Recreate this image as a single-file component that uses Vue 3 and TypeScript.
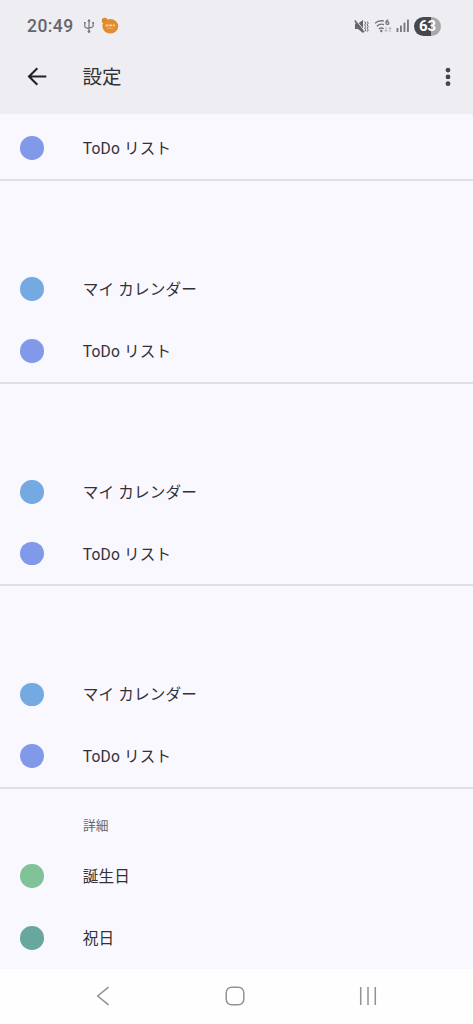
<script setup lang="ts">
interface Item { label: string; tone: string }
interface Group { kind: string; title?: string; items: Item[] }

const todo: Item = { label: 'ToDo リスト', tone: 'indigo' }
const mine: Item = { label: 'マイ カレンダー', tone: 'sky' }

const groups: Group[] = [
  { kind: 'first', items: [todo] },
  { kind: 'account', items: [mine, todo] },
  { kind: 'account', items: [mine, todo] },
  { kind: 'account', items: [mine, todo] },
  {
    kind: 'details',
    title: '詳細',
    items: [
      { label: '誕生日', tone: 'green' },
      { label: '祝日', tone: 'teal' },
    ],
  },
]
</script>

<template>
  <div class="screen">
    <header class="top">
      <div class="status">
        <span class="clock">20:49</span>
        <svg class="usb" width="12" height="16" viewBox="0 0 12 16" fill="none" stroke="#77767c" stroke-width="1.2">
          <path d="M6 2v11M1.8 5.5v2.7q0 1.8 4.2 2.2M10.2 5v2.7q0 1.8-4.2 2.2" />
          <path d="M4.3 3.5 6 .8l1.7 2.7zM1 4h1.7v1.7H1zM9.3 4H11v1.7H9.3z" fill="#77767c" stroke="none" />
          <circle cx="6" cy="13.6" r="1.4" fill="#77767c" stroke="none" />
        </svg>
        <svg class="badge" width="18" height="18" viewBox="0 0 18 18">
          <circle cx="3.7" cy="3.7" r="2.9" fill="#dd872d" />
          <ellipse cx="9.300" cy="9.3" rx="7.9" ry="7.3" fill="#e38b30" />
          <path d="M4.500 8.300h3m.7 0h3m.7 0h2" stroke="#f6d3a8" stroke-width="1.7" />
          <path d="M6 11.200h6" stroke="#eeb172" stroke-width="1" />
        </svg>
        <div class="spacer"></div>
        <svg class="mute" width="15" height="15" viewBox="0 0 15 15" fill="none" stroke="#66656b" stroke-width="1.2">
          <path d="M1 4.500h3L9 1v13l-5-4H1z" fill="#66656b" stroke="none" />
          <path d="M1.900.8 10.500 12" stroke="#ededf2" stroke-width="1" />
          <path d="M.8 1.500 9.700 13.300" stroke-width="1.500" />
          <path d="M10.700 2.500l1 1.700-1 1.700 1 1.700-1 1.700 1 1.700-1 1.600M13.200 2.500l1 1.700-1 1.700 1 1.700-1 1.700 1 1.700-1 1.600" stroke-width="1" />
        </svg>
        <svg class="wifi" width="19" height="16" viewBox="0 0 19 16" fill="none" stroke="#77767c" stroke-width="1.3">
          <path d="M1 5.300q3.500-3.400 8.800-2.300M2.800 8.200q3-2.900 7.200-1.600M4.900 10.900q2.300-1.700 4.900-.2" />
          <circle cx="7.300" cy="13" r="1.200" fill="#77767c" stroke="none" />
          <path d="M14.200 1.800q-2.200.5-2.200 3" />
          <circle cx="13.500" cy="5.100" r="1.400" />
          <path d="M12 9v4.500m-1.500-1.500 1.500 1.500 1.500-1.500M16 14V9.500m-1.500 1.500L16 9.500l1.500 1.500" stroke="#b5b4ba" stroke-width="1" />
        </svg>
        <svg class="signal" width="14" height="14" viewBox="0 0 14 14" fill="#7b7a80">
          <rect x="0.500" y="9" width="1.900" height="4" rx=".5" />
          <rect x="4" y="6.500" width="1.900" height="6.500" rx=".5" />
          <rect x="7.500" y="3.500" width="1.900" height="9.500" rx=".5" />
          <rect x="11" y="0.500" width="1.900" height="12.500" rx=".5" />
        </svg>
        <div class="battery">63</div>
      </div>
      <div class="bar">
        <svg class="back" width="20" height="20" viewBox="0 0 20 20" fill="none" stroke="#222127" stroke-width="2.1">
          <path d="M19.300 9.500H2.200M10.300 1.200 2 9.500l8.300 8.300" />
        </svg>
        <h1>設定</h1>
        <svg class="more" width="6" height="20" viewBox="0 0 6 20" fill="#47464c">
          <circle cx="3" cy="3.100" r="2.400" /><circle cx="3" cy="9.900" r="2.400" /><circle cx="3" cy="16.700" r="2.400" />
        </svg>
      </div>
    </header>

    <main>
      <section v-for="(group, g) in groups" :key="g" :class="group.kind">
        <h2 v-if="group.title">{{ group.title }}</h2>
        <div v-for="item in group.items" :key="item.label" class="row">
          <span class="dot" :class="item.tone"></span>
          <span class="label">{{ item.label }}</span>
        </div>
      </section>
    </main>

    <nav>
      <svg width="14" height="20" viewBox="0 0 14 20"><path d="M12.500 1.200 1.700 10l10.800 8.800" /></svg>
      <svg width="20" height="20" viewBox="0 0 20 20"><rect x="1.200" y="1.200" width="17.600" height="17.600" rx="5.500" /></svg>
      <svg width="18" height="20" viewBox="0 0 18 20"><path d="M1.700 1v18M9 1v18M16.300 1v18" /></svg>
    </nav>
  </div>
</template>

<style>
body { margin: 0; background: #faf8ff; }
</style>

<style scoped>
.screen {
  width: 473px;
  height: 1024px;
  display: flex;
  flex-direction: column;
  overflow: hidden;
  background: #faf8ff;
  color: #323137;
  font-family: Roboto, "Noto Sans CJK JP", sans-serif;
}
.top { height: 114px; flex: none; background: #ededf2; }
.status { height: 52px; box-sizing: border-box; padding: 0 32px 0 27px; display: flex; align-items: center; }
.clock { width: 47px; font: 500 17.5px/20px Roboto, sans-serif; letter-spacing: .45px; color: #66656b; }
.usb { margin-left: 9px; }
.badge { margin-left: 6px; }
.spacer { flex: 1; }
.wifi { margin-left: 5px; }
.signal { margin-left: 3px; }
.battery {
  width: 27px;
  height: 19px;
  margin-left: 4px;
  border-radius: 10px;
  background: linear-gradient(90deg, #48474d 63%, #a8a7ad 63%);
  color: #fff;
  font: 700 15px/19px Roboto, sans-serif;
  text-align: center;
}
.bar { height: 50px; display: flex; align-items: center; padding: 0 22px 0 27px; }
h1 { margin: 0 0 0 35.5px; padding-top: 2px; flex: 1; font-size: 19.5px; line-height: 28px; font-weight: 400; }
main { flex: 1; min-height: 0; overflow: hidden; }
section { box-sizing: border-box; }
.first { height: 67px; padding-top: 3.3px; border-bottom: 2px solid #e2e0e7; }
.account { height: 202.6px; padding-top: 77.3px; border-bottom: 2px solid #e2e0e7; }
.details { padding-top: 24.5px; }
h2 { margin: 0 0 7px 83px; height: 25px; font-size: 12.7px; line-height: 25px; font-weight: 400; color: #66656b; }
.row { height: 61.8px; display: flex; align-items: center; padding-left: 20px; }
.dot { width: 23.6px; height: 23.6px; border-radius: 50%; margin-right: 39.2px; }
.indigo { background: #8099e9; }
.sky { background: #75a9e2; }
.green { background: #80c398; }
.teal { background: #68a79d; }
.label { padding-top: 2px; font-size: 15.6px; line-height: 24px; letter-spacing: .15px; white-space: pre; }
nav {
  height: 55px;
  flex: none;
  display: flex;
  align-items: center;
  justify-content: space-between;
  box-sizing: border-box;
  padding: 0 96px 1px;
  background: #fefefe;
}
nav svg { fill: none; stroke: #929196; stroke-width: 1.5; }
</style>
